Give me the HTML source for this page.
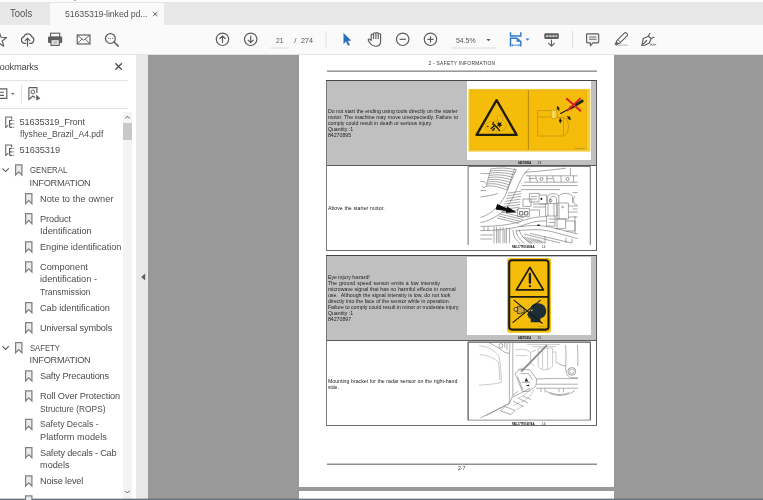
<!DOCTYPE html>
<html lang="en"><head><meta charset="utf-8"><title>51635319-linked pdf</title>
<style>
html,body{margin:0;padding:0;}
body{width:763px;height:500px;position:relative;overflow:hidden;background:#999;font-family:"Liberation Sans",sans-serif;}
.b{position:absolute;}
.t{position:absolute;white-space:pre;font-family:"Liberation Sans",sans-serif;}
#txt{position:absolute;left:0;top:0;width:763px;height:500px;will-change:transform;}
svg{position:absolute;overflow:visible;}
</style></head><body>
<div class="b" style="left:0px;top:0px;width:763px;height:3px;background:#fcfcfc;"></div>
<div class="b" style="left:0px;top:1.8px;width:763px;height:0.9px;background:#e6e6e6;"></div>
<div class="b" style="left:73.6px;top:0px;width:2px;height:0.7px;background:#aaaaaa;"></div>
<div class="b" style="left:0px;top:2.7px;width:763px;height:22.7px;background:#e8e8e8;"></div>
<div class="b" style="left:50px;top:2.7px;width:113.5px;height:22.7px;background:#fafafa;border-radius:2px 2px 0 0;"></div>
<div class="b" style="left:0px;top:25.4px;width:763px;height:29.1px;background:#fafafa;"></div>
<div class="b" style="left:0px;top:54px;width:763px;height:1px;background:#e3e3e3;"></div>
<div class="b" style="left:148px;top:55px;width:615px;height:445px;background:#999999;"></div>
<div class="b" style="left:0px;top:55px;width:136px;height:445px;background:#ffffff;"></div>
<div class="b" style="left:136px;top:55px;width:12px;height:445px;background:#e9e9e9;"></div>
<div class="b" style="left:123px;top:112px;width:9.4px;height:388px;background:#f4f4f4;"></div>
<div class="b" style="left:123px;top:122.6px;width:9.2px;height:17.6px;background:#c8c8c8;"></div>
<div class="b" style="left:0px;top:80px;width:128px;height:1px;background:#e2e2e2;"></div>
<div class="b" style="left:0px;top:108px;width:128px;height:1px;background:#e2e2e2;"></div>
<div class="b" style="left:20.7px;top:85px;width:1px;height:18px;background:#e4e4e4;"></div>
<div class="b" style="left:299px;top:55px;width:315px;height:432.2px;background:#ffffff;"></div>
<div class="b" style="left:299px;top:491px;width:315px;height:8px;background:#ffffff;"></div>
<div class="b" style="left:327px;top:70px;width:270px;height:1px;background:#c2c2c2;"></div>
<div class="b" style="left:327px;top:71px;width:270px;height:1px;background:#9a9a9a;"></div>
<div class="b" style="left:327px;top:80px;width:270px;height:170.4px;background:#ffffff;"></div>
<div class="b" style="left:327px;top:80px;width:270px;height:85.19999999999999px;background:#c0c0c0;"></div>
<div class="b" style="left:326.3px;top:80px;width:1.1px;height:170.4px;background:#7a7a7a;"></div>
<div class="b" style="left:596.1px;top:80px;width:1.0px;height:170.4px;background:#5a5a5a;"></div>
<div class="b" style="left:326.3px;top:79.6px;width:270.8px;height:1.1px;background:#454545;"></div>
<div class="b" style="left:326.3px;top:249.9px;width:270.8px;height:1.0px;background:#6a6a6a;"></div>
<div class="b" style="left:327px;top:164.79999999999998px;width:270px;height:0.9px;background:#5a5a5a;"></div>
<div class="b" style="left:467.2px;top:81.2px;width:123.6px;height:78.6px;background:#ffffff;"></div>
<div class="b" style="left:327px;top:255.6px;width:270px;height:170.00000000000003px;background:#ffffff;"></div>
<div class="b" style="left:327px;top:255.6px;width:270px;height:84.70000000000002px;background:#c0c0c0;"></div>
<div class="b" style="left:326.3px;top:255.6px;width:1.1px;height:170.00000000000003px;background:#7a7a7a;"></div>
<div class="b" style="left:596.1px;top:255.6px;width:1.0px;height:170.00000000000003px;background:#5a5a5a;"></div>
<div class="b" style="left:326.3px;top:255.2px;width:270.8px;height:1.1px;background:#454545;"></div>
<div class="b" style="left:326.3px;top:425.1px;width:270.8px;height:1.0px;background:#6a6a6a;"></div>
<div class="b" style="left:327px;top:339.90000000000003px;width:270px;height:0.9px;background:#5a5a5a;"></div>
<div class="b" style="left:467.2px;top:256.8px;width:123.6px;height:78.2px;background:#ffffff;"></div>
<div class="b" style="left:327px;top:463px;width:270px;height:1px;background:#c6c6c6;"></div>
<div class="b" style="left:327px;top:464px;width:270px;height:1px;background:#8e8e8e;"></div>
<div class="b" style="left:0px;top:498px;width:763px;height:1px;background:rgba(90,105,120,0.35);"></div>
<div class="b" style="left:0px;top:499px;width:763px;height:1px;background:#66727e;"></div>
<svg width="763" height="500" viewBox="0 0 763 500" style="left:0;top:0"><polygon points="-0.90,32.10 1.04,37.23 6.52,37.49 2.24,40.92 3.68,46.21 -0.90,43.20 -5.48,46.21 -4.04,40.92 -8.32,37.49 -2.84,37.23" fill="none" stroke="#5e5e5e" stroke-width="1.2" stroke-linejoin="round"/>
<path transform="translate(27.6,39.6) scale(0.92,0.97) translate(-27.6,-39.6)" d="M25.6,43.4 H24.4 A3.4,3.4 0 0 1 23.5,36.7 A4.5,4.5 0 0 1 32,36.6 A3.5,3.5 0 0 1 31,43.4 H29.6" fill="none" stroke="#5e5e5e" stroke-width="1.3" stroke-linecap="round"/>
<path d="M27.5,46.2 V38.4 M25.2,40.6 L27.5,38.2 L29.8,40.6" fill="none" stroke="#5e5e5e" stroke-width="1.2" stroke-linecap="round" stroke-linejoin="round"/>
<rect x="50.6" y="33.2" width="9.1" height="4" fill="#fafafa" stroke="#5e5e5e" stroke-width="1.1"/>
<rect x="48" y="36.4" width="14.2" height="6.6" rx="1" fill="#5e5e5e"/>
<rect x="51" y="39.6" width="8.3" height="5.8" fill="#e4e4e4" stroke="#5e5e5e" stroke-width="1.1"/>
<rect x="53.6" y="41.2" width="3.4" height="2.4" fill="#bdbdbd"/>
<rect x="77.2" y="35" width="12.8" height="9" fill="none" stroke="#5e5e5e" stroke-width="1.15"/>
<path d="M77.4,35.2 L83.6,40.2 L89.8,35.2 M77.4,43.8 L82,39 M89.8,43.8 L85.2,39" fill="none" stroke="#5e5e5e" stroke-width="0.9"/>
<circle cx="110.4" cy="38.4" r="4.9" fill="none" stroke="#5e5e5e" stroke-width="1.25"/>
<path d="M114,42 L118.3,46.1" stroke="#5e5e5e" stroke-width="1.5" stroke-linecap="round"/>
<path d="M108,38.5 h0.9 M110,38.5 h0.9 M112,38.5 h0.9" stroke="#5e5e5e" stroke-width="0.9"/>
<circle cx="222.5" cy="39.3" r="6.2" fill="none" stroke="#5e5e5e" stroke-width="1.2"/>
<path d="M222.5,42.5 V35.9 M219.9,38.5 L222.5,35.9 L225.1,38.5" fill="none" stroke="#5e5e5e" stroke-width="1.2" stroke-linecap="round" stroke-linejoin="round"/>
<circle cx="250.7" cy="39.3" r="6.2" fill="none" stroke="#5e5e5e" stroke-width="1.2"/>
<path d="M250.7,36.099999999999994 V42.699999999999996 M248.1,40.099999999999994 L250.7,42.699999999999996 L253.29999999999998,40.099999999999994" fill="none" stroke="#5e5e5e" stroke-width="1.2" stroke-linecap="round" stroke-linejoin="round"/>
<rect x="270.5" y="47.5" width="18.6" height="1" fill="#dcdcdc"/>
<rect x="325.6" y="31" width="0.9" height="17" fill="#dedede"/>
<rect x="572" y="31" width="0.9" height="17" fill="#dedede"/>
<rect x="450.5" y="47.5" width="45.3" height="1" fill="#dcdcdc"/>
<path d="M343.5,33 V43.9 L346,41.6 L348,45.8 L349.9,44.9 L347.9,40.9 L351.2,40.6 Z" fill="#2a70c2"/>
<g transform="translate(375,0) scale(1.12,1) translate(-374.6,0)"><path d="M371.2,40.5 V35.2 a1.05,1.05 0 0 1 2.1,0 V33.8 a1.05,1.05 0 0 1 2.1,0 V33.6 a1.05,1.05 0 0 1 2.1,0 V34.6 a1.05,1.05 0 0 1 2.1,0 V41 C379.8,44.5 378.2,46.3 375.6,46.3 C372.8,46.3 371.4,45 369.6,42.2 C368.6,40.6 368.2,39.6 368.9,39.1 C369.6,38.7 370.4,39.3 371.2,40.5 Z" fill="#fafafa" stroke="#5e5e5e" stroke-width="1.1" stroke-linejoin="round"/>
<path d="M373.3,35.2 V39 M375.4,34 V39 M377.5,34.6 V39" stroke="#5e5e5e" stroke-width="1" fill="none"/></g>
<circle cx="402.7" cy="39.3" r="6.2" fill="none" stroke="#5e5e5e" stroke-width="1.2"/><path d="M399.6,39.3 H405.8" stroke="#5e5e5e" stroke-width="1.2"/>
<circle cx="430.5" cy="39.3" r="6.2" fill="none" stroke="#5e5e5e" stroke-width="1.2"/><path d="M427.4,39.3 H433.6 M430.5,36.2 V42.4" stroke="#5e5e5e" stroke-width="1.2"/>
<path d="M486.3,39 h4.3 l-2.15,2.3 z" fill="#5e5e5e"/>
<path d="M510.5,32.2 V36 H520.8 V32.2" fill="none" stroke="#2e78c8" stroke-width="1.45"/>
<path d="M510.5,46.6 V38.2 H516.8 L520.8,41.6 V46.6" fill="none" stroke="#2e78c8" stroke-width="1.45"/>
<path d="M516.6,38.4 V41.8 H520.6 Z" fill="#2e78c8"/>
<path d="M511.6,45.2 H519.7 M512.8,44.2 L511.6,45.2 L512.8,46.2 M518.5,44.2 L519.7,45.2 L518.5,46.2" fill="none" stroke="#2e78c8" stroke-width="0.8"/>
<path d="M525.6,38.6 h3.8 l-1.9,2.2 z" fill="#2e78c8"/>
<rect x="544.3" y="33.3" width="14.6" height="5.6" rx="1.2" fill="#5e5e5e"/>
<path d="M546.2,36.1 h2.2 M549.3,36.1 h2.2 M552.4,36.1 h2.2 M555.5,36.1 h1.7" stroke="#d8d8d8" stroke-width="1.6"/>
<path d="M551.5,40.2 V46 M548.7,43.4 L551.5,46.2 L554.3,43.4" fill="none" stroke="#5e5e5e" stroke-width="1.2" stroke-linecap="round" stroke-linejoin="round"/>
<path d="M587.4,33.8 H597.9 a0.8,0.8 0 0 1 0.8,0.8 V42 a0.8,0.8 0 0 1 -0.8,0.8 H593 L590.4,45.8 V42.8 H587.4 a0.8,0.8 0 0 1 -0.8,-0.8 V34.6 a0.8,0.8 0 0 1 0.8,-0.8 Z" fill="#f1f1f1" stroke="#5e5e5e" stroke-width="1.15" stroke-linejoin="round"/>
<path d="M589,37.1 H596.4 M589,39.3 H596.4" stroke="#5e5e5e" stroke-width="0.9"/>
<rect x="618" y="44.4" width="9.6" height="1.6" fill="#cfcfcf"/>
<g transform="translate(620.8,39.4) rotate(-45)"><rect x="-5" y="-1.9" width="13.5" height="3.8" rx="1.6" fill="#fafafa" stroke="#5e5e5e" stroke-width="1.1"/><path d="M-5,-1.5 L-7.6,-0.8 V0.8 L-5,1.5 Z" fill="#5e5e5e" stroke="#5e5e5e" stroke-width="0.6"/><path d="M-2.2,-1.9 V1.9" stroke="#5e5e5e" stroke-width="0.8"/></g>
<path d="M641.8,45.5 L643.3,38.6 L648.3,36.2 L651.2,38.5 L649.3,43 L644.8,45.2 Z" fill="#fafafa" stroke="#5e5e5e" stroke-width="1.15" stroke-linejoin="round"/>
<path d="M642,45.3 L646.2,41 M648.3,36.2 L649.9,33.3 M651.2,38.5 L654,37.3" fill="none" stroke="#5e5e5e" stroke-width="1.1" stroke-linecap="round"/>
<circle cx="646.5" cy="40.7" r="0.8" fill="#5e5e5e"/>
<path d="M650.3,43.6 L652.2,45.6 M652.2,43.6 L650.3,45.6 M652.8,45.5 C653.4,43.8 654,43.8 654.3,45.3 C654.8,44.2 655.4,44.2 656,45.3" fill="none" stroke="#5e5e5e" stroke-width="0.8"/>
<path d="M153,11.8 L157.4,16.2 M157.4,11.8 L153,16.2" stroke="#555" stroke-width="0.95"/>
<path d="M115.3,63.2 L121.9,69.8 M121.9,63.2 L115.3,69.8" stroke="#505050" stroke-width="1.25"/>
<path d="M-2,88.9 H6.8 V98.4 H-2" fill="none" stroke="#5e5e5e" stroke-width="1.15"/>
<path d="M-1,92.2 H4 M-1,95.4 H4" stroke="#5e5e5e" stroke-width="1.15"/>
<path d="M11.1,93.1 h3.4 l-1.7,2 z" fill="#5e5e5e"/>
<path d="M28.9,87.6 H36.9 V93 M28.9,87.6 V99.4 L32.9,96 L35,97.8" fill="none" stroke="#5e5e5e" stroke-width="1.15" stroke-linejoin="miter"/>
<circle cx="32.9" cy="91.9" r="1.9" fill="none" stroke="#5e5e5e" stroke-width="1"/>
<path d="M36,94.6 L40.4,98.4 L36.4,100.6 Z" fill="#5e5e5e"/>
<path d="M125.2,118.4 L127.4,116.2 L129.6,118.4" fill="none" stroke="#505050" stroke-width="0.95"/>
<path d="M125.2,490.8 L127.4,493 L129.6,490.8" fill="none" stroke="#505050" stroke-width="0.95"/>
<path d="M145.2,273.6 V280.4 L141.2,277 Z" fill="#606060"/>
<path d="M5.7,127.7 V117.0 H11.6 V119.5" fill="none" stroke="#6a6a6a" stroke-width="1.1"/>
<path d="M5.7,127.7 L8.2,125.1" fill="none" stroke="#6a6a6a" stroke-width="1.1"/>
<path d="M9.6,119.9 V127.3" stroke="#5a5a5a" stroke-width="1.1"/>
<path d="M9.6,120.5 H14.4 M9.6,123.9 H14.4 M9.6,127.3 H14.4" stroke="#5a5a5a" stroke-width="1.2" stroke-dasharray="2.3 0.7 0.9 0.7"/>
<path d="M5.7,155.7 V145.0 H11.6 V147.5" fill="none" stroke="#6a6a6a" stroke-width="1.1"/>
<path d="M5.7,155.7 L8.2,153.1" fill="none" stroke="#6a6a6a" stroke-width="1.1"/>
<path d="M9.6,147.9 V155.3" stroke="#5a5a5a" stroke-width="1.1"/>
<path d="M9.6,148.5 H14.4 M9.6,151.9 H14.4 M9.6,155.3 H14.4" stroke="#5a5a5a" stroke-width="1.2" stroke-dasharray="2.3 0.7 0.9 0.7"/>
<path d="M2.4,168.4 L5.6,171.6 L8.8,168.4" fill="none" stroke="#555" stroke-width="1.05"/>
<path d="M15.6,164.9 H21.9 V175.0 L18.75,171.8 L15.6,175.0 Z" fill="#ececec" stroke="#808080" stroke-width="1.25" stroke-linejoin="miter"/>
<path d="M2.4,346.2 L5.6,349.4 L8.8,346.2" fill="none" stroke="#555" stroke-width="1.05"/>
<path d="M15.6,342.70000000000005 H21.9 V352.8 L18.75,349.59999999999997 L15.6,352.8 Z" fill="#ececec" stroke="#808080" stroke-width="1.25" stroke-linejoin="miter"/>
<path d="M25.6,193.5 H31.9 V203.6 L28.75,200.4 L25.6,203.6 Z" fill="#ececec" stroke="#808080" stroke-width="1.25" stroke-linejoin="miter"/>
<path d="M25.6,213.5 H31.9 V223.6 L28.75,220.4 L25.6,223.6 Z" fill="#ececec" stroke="#808080" stroke-width="1.25" stroke-linejoin="miter"/>
<path d="M25.6,241.9 H31.9 V252.0 L28.75,248.8 L25.6,252.0 Z" fill="#ececec" stroke="#808080" stroke-width="1.25" stroke-linejoin="miter"/>
<path d="M25.6,261.90000000000003 H31.9 V272.0 L28.75,268.79999999999995 L25.6,272.0 Z" fill="#ececec" stroke="#808080" stroke-width="1.25" stroke-linejoin="miter"/>
<path d="M25.6,302.70000000000005 H31.9 V312.8 L28.75,309.59999999999997 L25.6,312.8 Z" fill="#ececec" stroke="#808080" stroke-width="1.25" stroke-linejoin="miter"/>
<path d="M25.6,322.70000000000005 H31.9 V332.8 L28.75,329.59999999999997 L25.6,332.8 Z" fill="#ececec" stroke="#808080" stroke-width="1.25" stroke-linejoin="miter"/>
<path d="M25.6,370.90000000000003 H31.9 V381.0 L28.75,377.79999999999995 L25.6,381.0 Z" fill="#ececec" stroke="#808080" stroke-width="1.25" stroke-linejoin="miter"/>
<path d="M25.6,390.90000000000003 H31.9 V401.0 L28.75,397.79999999999995 L25.6,401.0 Z" fill="#ececec" stroke="#808080" stroke-width="1.25" stroke-linejoin="miter"/>
<path d="M25.6,419.3 H31.9 V429.4 L28.75,426.19999999999993 L25.6,429.4 Z" fill="#ececec" stroke="#808080" stroke-width="1.25" stroke-linejoin="miter"/>
<path d="M25.6,447.70000000000005 H31.9 V457.8 L28.75,454.59999999999997 L25.6,457.8 Z" fill="#ececec" stroke="#808080" stroke-width="1.25" stroke-linejoin="miter"/>
<path d="M25.6,475.90000000000003 H31.9 V486.0 L28.75,482.79999999999995 L25.6,486.0 Z" fill="#ececec" stroke="#808080" stroke-width="1.25" stroke-linejoin="miter"/>
<path d="M25.6,495.90000000000003 H31.9 V506.0 L28.75,502.79999999999995 L25.6,506.0 Z" fill="#ececec" stroke="#808080" stroke-width="1.25" stroke-linejoin="miter"/>
<rect x="468.3" y="88.9" width="122" height="62.7" fill="#f7cc38"/>
<rect x="470.2" y="90.4" width="116.5" height="59.1" fill="#f5bd0a" stroke="#d9a514" stroke-width="0.5"/>
<path d="M528.4,90.4 V149.5" stroke="#8a6410" stroke-width="0.6"/>
<path d="M496.6,100.2 L476.6,134.9 H516.6 Z" fill="none" stroke="#221e10" stroke-width="2.4" stroke-linejoin="round"/>
<path d="M485.4,126.6 C485.2,123.6 488,121.6 491.6,121.4 L497.6,121.2 L497.4,116.4 C497.6,114.6 502.2,114.6 502.4,116.4 L502.6,120.2 C505.6,121.4 506.6,124.4 505.6,127.6 C504.6,130.6 501,131.4 497,131 L488.6,130.6 C486.4,130.2 485.4,128.6 485.4,126.6 Z" fill="none" stroke="#c28f08" stroke-width="0.6"/>
<circle cx="487.8" cy="126.5" r="0.8" fill="#1d1b16"/>
<path d="M491.2,128.4 L494.6,125.4 L497.2,127.6 L499.4,130.4 M492.6,123.8 L494.8,125.2 M494.4,128.6 L492.8,130.2" fill="none" stroke="#1d1b16" stroke-width="1.4" stroke-linecap="round" stroke-linejoin="round"/>
<path d="M498.4,121 L499.6,123 L501.8,122.2 L500.8,124.2 L502.6,125.6 L500.4,125.8 L500,128 L498.8,126 L496.8,126.4 L498,124.6 L496.6,122.8 L498.6,123.2 Z" fill="#1d1b16"/>
<circle cx="493.4" cy="122.6" r="0.7" fill="#1d1b16"/>
<path d="M537.6,110.6 H551 M557,113 V117.4 H563.5 C567.2,118.6 568.6,123 568.4,127 C568.2,132 566.4,135.4 563.5,136 H537.6" fill="none" stroke="#c4940c" stroke-width="0.8"/>
<path d="M537.6,117 H551 M563.5,117.4 V136 M537.6,110.6 V136" fill="none" stroke="#c4940c" stroke-width="0.8"/>
<rect x="551" y="110.2" width="6" height="8.4" rx="1.6" fill="#f8cf45" stroke="#c4940c" stroke-width="0.7"/>
<path d="M553.4,111.4 V117.6" stroke="#fbe08a" stroke-width="1.1"/>
<path d="M560.6,113.4 L570.4,108.2" stroke="#1b1b1b" stroke-width="1.1" stroke-linecap="round"/>
<path d="M570.6,108 L582.2,101" stroke="#1f2a1c" stroke-width="3" stroke-linecap="round"/>
<path d="M557.4,106 L559.6,108.6 L558.6,108.8 L559.2,111 L557.8,109 L557,109.4 Z M570.6,120 L567.6,118.4 L568.4,117.8 L566.8,116.2 L569.2,117 L569.6,116.2 Z M560.2,123.2 L559,119.8 L560,120 L560,118 L561,120.2 L561.8,120 Z" fill="#1b1b1b" stroke="#1b1b1b" stroke-width="0.4"/>
<path d="M566.8,98.8 L580.4,110.8 M580,98.6 L567.6,110.4" stroke="#d6222a" stroke-width="2" stroke-linecap="round"/>
<rect x="468.1" y="166.4" width="122.2" height="78.4" fill="#ffffff"/><path d="M468.1,244.8 V166.4 H590.3 V244.8" fill="none" stroke="#4a4a4a" stroke-width="0.8"/>
<path d="M491,168.6 C489,175 487.6,181 486.4,186.4 M516.4,169.6 C513,177 510,184 507,189.8 M491.0,169.0 C499.0,167.4 508.4,167.8 516.4,170.0 M490.4,171.2 C498.4,169.6 507.2,170.3 515.2,172.5 M489.9,173.3 C497.9,171.8 506.0,172.8 514.0,174.9 M489.3,175.5 C497.3,173.9 504.9,175.2 512.9,177.4 M488.7,177.7 C496.7,176.1 503.7,177.7 511.7,179.9 M488.1,179.9 C496.1,178.3 502.5,180.2 510.5,182.4 M487.6,182.1 C495.6,180.5 501.3,182.7 509.3,184.8 M487.0,184.2 C495.0,182.6 500.2,185.1 508.2,187.3 M486.4,186.4 C494.4,184.8 499.0,187.6 507.0,189.8 M480.4,173.6 H489.6 M480.4,181.6 C483,181 485,182 486.6,183.6 M482,186 l2,2 l2,-2 M480.4,190.6 H486 M480.4,197 C486,196.4 492,195.4 498,193.4 M515,168 C511,178 509.6,184 507.6,190 C505,197 501,203 496,208 C491.6,212.6 486,216 480.4,217.6 M529.4,168.4 C524,173 520.4,180 517.6,186.6 C514,195 511.4,201 507.6,206.4 C503,212.6 492,220.6 480.4,222.6 M524.4,172.4 C538,171.4 552,170 566,168.2 M570.4,168.2 V175.4 M526,175.8 H577.6 M524,182.2 H577.6 M522,185.6 H577.6 M521,189.6 H560 M530,175.8 V182.2 M535.6,175.8 L537.6,182.2 M547,175.8 V182.2 M552.6,175.8 L554.4,182.2 M561,175.8 V182.2 M573.6,175.8 V182.2 M529,178.6 H536 M546,178.6 H553 M529.4,193.4 H539 V202 H529.4 Z M539,195 H546.6 V204 H539 M531,196.6 H537 M531,199 H537 M547.6,203 V197 C548,192.6 558.4,192.6 558.8,197 V203 M550,203 V198.6 C550.6,195.6 556,195.6 556.4,198.6 V203 M558.8,196 C562,192 570,192.6 572.6,196.6 V203 M572.6,192.6 H577.6 M575,196 C573,198.6 573,202.6 575.6,205 H577.6 M572.6,209 H577.6 M557,203 H568.4 V219 H557 Z M559,203 V219 M545.6,203.6 H557 V216 H545.6 Z M548,203.6 V216 M554,203.6 V216 M523,199 H531 V206.4 H523 Z M517.6,208.6 H529.4 V216.6 H517.6 Z M529.4,210 H539.6 V216 M533,204 H545.6 M533,207 H545.6 M546.6,216 V226 H555 V216 M555,219 H565.6 V228.6 H555 M565.6,221 H575 V231 H565.6 M575,216 V233 M557,219 V228.6 M548.6,219 H555 M548.6,222.4 H555 M568.4,206 H577.6 M568.4,212 H577.6 M568.4,217 H577.6 M480.4,226.4 C498,226.4 512,224.6 523,220.6 C531,217.6 538,216.6 546.6,216.6 M480.4,230.6 C499,230.6 514,228.6 525.6,224.4 C533,221.6 539,220.8 546.6,220.8 M519,226.8 C531,225 540,225 550,227 L577.6,234 M516,231 C531,229 541,229.4 551,231.4 L577.6,238.6 M524,234 L560,243 M530,233.4 L572,243 M545,236 V243 M566,237.6 V243 M572,238.8 V243 M494,226.6 V243.4 M496.6,226.6 V243.4 M500,227 V243.4 M503,227 V243.4 M506.4,227.6 V243.4 M509.6,228 V243.4 M498.2,229 V243 M504.8,230 V243 M480.4,235 H493 M480.4,239 H492 M484,226.6 V231 M488,226.6 V231 M513,229.6 C513,236 516,240.6 520,243.4 M516,229.6 C516.4,236 520,240 524.6,243.4 M519,229.6 C521,236 526,240.6 532,243.4 M522.0,236.0 L530.0,243.4 M524.6,236.6 L532.6,243.4 M527.2,237.2 L535.2,243.4 M529.8,237.8 L537.8,243.4 M532.4,238.4 L540.4,243.4 M535.0,239.0 L543.0,243.4 M537.6,239.6 L545.6,243.4 M508.0,193.2 L521.4,191.0 M507.1,195.9 L521.1,193.7 M506.2,198.6 L520.8,196.4 M505.3,201.3 L520.5,199.1 M504.4,204.0 L520.2,201.8 M503.5,206.7 L519.9,204.5 M502.6,209.4 L519.6,207.2 M501.7,212.1 L519.3,209.9 M500,214 L523,219.6 M498.6,216 L521,221.6 M497,218 L519,223.4 M502,212 L524,217.6" fill="none" stroke="#6f6f6f" stroke-width="0.6"/>
<circle cx="541.4" cy="179" r="1.5" fill="none" stroke="#555" stroke-width="0.6"/><circle cx="567.6" cy="179" r="1.5" fill="none" stroke="#555" stroke-width="0.6"/><circle cx="550.6" cy="200.6" r="1.3" fill="none" stroke="#444" stroke-width="0.6"/><circle cx="562.6" cy="207" r="0.9" fill="none" stroke="#555" stroke-width="0.5"/>
<path d="M541.4,197.6 l1.3,1.3 l-1.3,1.3 l-1.3,-1.3 z M537.4,224.4 h2.4 v1.6 h-2.4 z" fill="#222"/>
<path d="M519.6,211.6 h3.2 v3.4 h-3.2 z M524.6,211.6 h3.2 v3.4 h-3.2 z" fill="none" stroke="#333" stroke-width="0.7"/>
<path d="M497.1,203.9 L507,208.2 L507.2,206.6 L516.8,212.4 L506,212.8 L505.8,211.1 L495.6,209.6 Z" fill="#0c0c0c"/>
<rect x="507" y="257.9" width="44" height="74.8" rx="3.2" fill="#f5bd0a"/>
<rect x="509.2" y="260.3" width="39.3" height="69.3" rx="2.8" fill="none" stroke="#1d1b16" stroke-width="2.1"/>
<path d="M509.2,296.9 H548.5" stroke="#1d1b16" stroke-width="1.9"/>
<path d="M529.9,267.4 L516.4,289.9 H543.4 Z" fill="none" stroke="#1d1b16" stroke-width="1.8" stroke-linejoin="round"/>
<path d="M529.9,274 V282.8" stroke="#1d1b16" stroke-width="2.3" stroke-linecap="round"/><circle cx="529.9" cy="286.2" r="1.15" fill="#1d1b16"/>
<path d="M530.4,309.4 C530.8,305 534,303.2 538.2,303.2 C543,303.2 546.4,306.8 546.2,311.4 C546,315 544,317.4 540.4,318.6 L540.2,322.2 H530.8 L530.6,318.4 C529,318.4 528.2,317.6 528.4,316.2 L527,314.6 L528.6,312.4 Z" fill="#1e2c36"/>
<circle cx="531.8" cy="310.4" r="0.8" fill="#e9c15a"/>
<path d="M517.4,306.6 H520.6 L524.2,308.4 V312.2 L520.6,313.6 H517.4 Z" fill="#caa23c" stroke="#1d1b16" stroke-width="0.7"/><circle cx="515.8" cy="309.4" r="1.9" fill="#f6d060" stroke="#1d1b16" stroke-width="0.8"/>
<path d="M514.2,300.4 L542.2,323.2 M540.2,300.4 L513,322.4" stroke="#1d1b16" stroke-width="1.2" stroke-linecap="round"/>
<rect x="468.1" y="342.1" width="122.2" height="78" fill="#ffffff" stroke="#777" stroke-width="0.8"/><path d="M468.1,420.1 V342.1 H590.3 V420.1" fill="none" stroke="#4a4a4a" stroke-width="0.8"/>
<path d="M479,345.8 C488,346.6 495,350 499,356.4 C500.6,364 501,374 501.4,382.6 C494,384 486,385 479,385 M479.8,354.6 C487,355 494,357.6 498.6,362.4 C499.4,368 499.6,374 499.6,380 M515,350 C521,348.6 527,349 530.6,352.4 V363 C528,367 523,369 517.4,369.4 M516,355.6 H527.4 M530.6,352.4 L536,350 M530.6,363 L535,366 M517,398.4 C523,396.4 528,392.6 530.4,388 M521,402.4 C527.4,399.6 532,395 534,389.4 M513,406 L520,402 M516,410 L524,405.4 M538.2,348.2 H552.6 V366 C549,370.6 543,370.6 539.6,368 M538.2,348.2 V366 M542.6,348.2 V368.6 M547.6,348.2 V369.6 M552.6,352 H556 V362 M539.6,368 L538.2,366 M527,344.4 H560 M532,346.6 H556" fill="none" stroke="#a2a2a2" stroke-width="0.55"/>
<path d="M489.4,343 C495,345.6 500,348.6 504.6,352.2 L509.4,353.6 V403.4 L480.6,417.8 M509.4,353.6 C510,349 510,346 509.6,343 M512.8,343 V395.4 L509.4,403.4 M499,345.8 a1.9,2.3 0 1 0 3.8,0 a1.9,2.3 0 1 0 -3.8,0 M504.8,343 V348 M507,343 V350 M515,373.4 L519.6,369.6 H529.6 L536.6,379 L536,385.6 L529,391.4 L522.4,391.4 Z M520.6,373.6 H528.4 L532.6,379.6 M521.6,382.4 H530.4 M517.6,376.6 L523,390 M513,397 L530,388.4 M509.4,403.4 L486,415.6 M512.8,395.4 L518,391.4 M505,406.6 L515,410.4 L511,414.6 L500.6,411 Z M513,401 L523,406.4 M519,398.6 L528,403 M523,396 L531,399.6 M565.4,345 C566.4,352 566,360 565.6,366 C565.6,372 567,376.6 571,377.8 H578 M577.4,345 C578,352 578,360 577.6,366 M545,378.6 H578 M536.6,379 L545,378.6 M536.4,384.2 H578 M536,388.2 H578 M541,388.4 V392 M545,388.4 V392.4 M559,388.4 V392 M563.6,388.4 V392.6 M550,392.4 C555,395 563,395.4 569,392.6 M546,391 C554,397 566,397 575,390.6 M556,362 C560,364.6 563,366 565.6,366" fill="none" stroke="#7a7a7a" stroke-width="0.6"/>
<circle cx="571.8" cy="371.4" r="3.9" fill="none" stroke="#6e6e6e" stroke-width="0.65"/><circle cx="571.8" cy="371.4" r="2.3" fill="none" stroke="#808080" stroke-width="0.55"/>
<path d="M521.2,371.6 L547,345.2" stroke="#8a8a8a" stroke-width="1.7" stroke-linecap="butt"/>
<path d="M524.6,381.4 l1.7,-3.6 l2,3.6 z M525.6,385.6 l3.6,-1.2 v1.8 z" fill="#222"/></svg>
<div id="txt"><span class="t" style="left:10.00px;top:7.00px;font-size:10.2px;line-height:13px;color:#555;transform:scaleX(0.9323);transform-origin:0 0;">Tools</span>
<span class="t" style="left:65.00px;top:8.00px;font-size:8.8px;line-height:12px;color:#555;letter-spacing:-0.107px;">51635319-linked pd...</span>
<span class="t" style="left:-6.50px;top:60.00px;font-size:9.4px;line-height:13px;color:#4b4b4b;letter-spacing:-0.235px;">Bookmarks</span>
<span class="t" style="left:19.60px;top:116.00px;font-size:9.2px;line-height:12px;color:#4d4d4d;letter-spacing:-0.152px;">51635319_Front</span>
<span class="t" style="left:19.60px;top:128.00px;font-size:9.2px;line-height:12px;color:#4d4d4d;transform:scaleX(0.9372);transform-origin:0 0;">flyshee_Brazil_A4.pdf</span>
<span class="t" style="left:19.60px;top:144.00px;font-size:9.2px;line-height:12px;color:#4d4d4d;letter-spacing:-0.054px;">51635319</span>
<span class="t" style="left:29.60px;top:164.00px;font-size:9.2px;line-height:12px;color:#4d4d4d;transform:scaleX(0.8483);transform-origin:0 0;">GENERAL</span>
<span class="t" style="left:29.60px;top:177.00px;font-size:9.2px;line-height:12px;color:#4d4d4d;letter-spacing:-0.247px;">INFORMATION</span>
<span class="t" style="left:40.00px;top:193.00px;font-size:9.2px;line-height:12px;color:#4d4d4d;letter-spacing:0.058px;">Note to the owner</span>
<span class="t" style="left:40.00px;top:213.00px;font-size:9.2px;line-height:12px;color:#4d4d4d;letter-spacing:-0.101px;">Product</span>
<span class="t" style="left:40.00px;top:225.00px;font-size:9.2px;line-height:12px;color:#4d4d4d;letter-spacing:0.010px;">Identification</span>
<span class="t" style="left:40.00px;top:241.00px;font-size:9.2px;line-height:12px;color:#4d4d4d;letter-spacing:-0.045px;">Engine identification</span>
<span class="t" style="left:40.00px;top:261.00px;font-size:9.2px;line-height:12px;color:#4d4d4d;letter-spacing:0.048px;">Component</span>
<span class="t" style="left:40.00px;top:273.00px;font-size:9.2px;line-height:12px;color:#4d4d4d;letter-spacing:0.021px;">identification -</span>
<span class="t" style="left:40.00px;top:286.00px;font-size:9.2px;line-height:12px;color:#4d4d4d;transform:scaleX(0.9326);transform-origin:0 0;">Transmission</span>
<span class="t" style="left:40.00px;top:302.00px;font-size:9.2px;line-height:12px;color:#4d4d4d;letter-spacing:-0.032px;">Cab identification</span>
<span class="t" style="left:40.00px;top:322.00px;font-size:9.2px;line-height:12px;color:#4d4d4d;letter-spacing:-0.138px;">Universal symbols</span>
<span class="t" style="left:29.60px;top:342.00px;font-size:9.2px;line-height:12px;color:#4d4d4d;transform:scaleX(0.8327);transform-origin:0 0;">SAFETY</span>
<span class="t" style="left:29.60px;top:354.00px;font-size:9.2px;line-height:12px;color:#4d4d4d;letter-spacing:-0.247px;">INFORMATION</span>
<span class="t" style="left:40.00px;top:370.00px;font-size:9.2px;line-height:12px;color:#4d4d4d;letter-spacing:-0.183px;">Safty Precautions</span>
<span class="t" style="left:40.00px;top:390.00px;font-size:9.2px;line-height:12px;color:#4d4d4d;letter-spacing:-0.106px;">Roll Over Protection</span>
<span class="t" style="left:40.00px;top:403.00px;font-size:9.2px;line-height:12px;color:#4d4d4d;transform:scaleX(0.9100);transform-origin:0 0;">Structure (ROPS)</span>
<span class="t" style="left:40.00px;top:418.00px;font-size:9.2px;line-height:12px;color:#4d4d4d;transform:scaleX(0.9394);transform-origin:0 0;">Safety Decals -</span>
<span class="t" style="left:40.00px;top:431.00px;font-size:9.2px;line-height:12px;color:#4d4d4d;letter-spacing:0.035px;">Platform models</span>
<span class="t" style="left:40.00px;top:447.00px;font-size:9.2px;line-height:12px;color:#4d4d4d;letter-spacing:-0.199px;">Safety decals - Cab</span>
<span class="t" style="left:40.00px;top:459.00px;font-size:9.2px;line-height:12px;color:#4d4d4d;letter-spacing:-0.010px;">models</span>
<span class="t" style="left:40.00px;top:475.00px;font-size:9.2px;line-height:12px;color:#4d4d4d;letter-spacing:-0.164px;">Noise level</span>
<span class="t" style="left:428.50px;top:60.00px;font-size:4.9px;line-height:7px;color:#333;letter-spacing:0.257px;">2 - SAFETY INFORMATION</span>
<span class="t" style="left:458.00px;top:464.00px;font-size:5.2px;line-height:8px;color:#333;letter-spacing:-0.072px;">2-7</span>
<span class="t" style="left:327.90px;top:107.00px;font-size:5.24px;line-height:8px;color:#222;word-spacing:0.009px;">Do not start the ending using tools directly on the starter</span>
<span class="t" style="left:327.90px;top:113.00px;font-size:5.24px;line-height:8px;color:#222;word-spacing:0.251px;">motor. The machine may move unexpectedly. Failure to</span>
<span class="t" style="left:327.90px;top:119.00px;font-size:5.24px;line-height:8px;color:#222;word-spacing:0.000px;">comply could result in death or serious injury.</span>
<span class="t" style="left:327.90px;top:125.00px;font-size:5.24px;line-height:8px;color:#222;word-spacing:0.000px;">Quantity :1</span>
<span class="t" style="left:327.90px;top:131.00px;font-size:5.24px;line-height:8px;color:#222;letter-spacing:0.000px;">84270895</span>
<span class="t" style="left:327.90px;top:204.00px;font-size:5.24px;line-height:8px;color:#222;word-spacing:0.293px;">Above the starter motor.</span>
<span class="t" style="left:327.90px;top:273.00px;font-size:5.24px;line-height:8px;color:#222;word-spacing:0.000px;">Eye injury hazard!</span>
<span class="t" style="left:327.90px;top:279.00px;font-size:5.24px;line-height:8px;color:#222;word-spacing:0.577px;">The ground speed sensor emits a low intensity</span>
<span class="t" style="left:327.90px;top:285.00px;font-size:5.24px;line-height:8px;color:#222;word-spacing:0.212px;">microwave signal that has no harmful effects in normal</span>
<span class="t" style="left:327.90px;top:291.00px;font-size:5.24px;line-height:8px;color:#222;word-spacing:0.200px;">use.  Although the signal intensity is low, do not look</span>
<span class="t" style="left:327.90px;top:297.00px;font-size:5.24px;line-height:8px;color:#222;word-spacing:0.028px;">directly into the face of the sensor while in operation.</span>
<span class="t" style="left:327.90px;top:303.00px;font-size:5.24px;line-height:8px;color:#222;word-spacing:-0.133px;">Failure to comply could result in minor or moderate injury.</span>
<span class="t" style="left:327.90px;top:309.00px;font-size:5.24px;line-height:8px;color:#222;word-spacing:0.000px;">Quantity :1</span>
<span class="t" style="left:327.90px;top:315.00px;font-size:5.24px;line-height:8px;color:#222;letter-spacing:0.000px;">84270897</span>
<span class="t" style="left:327.90px;top:377.00px;font-size:5.24px;line-height:8px;color:#222;word-spacing:0.143px;">Mounting bracket for the radar sensor on the right-hand</span>
<span class="t" style="left:327.90px;top:383.00px;font-size:5.24px;line-height:8px;color:#222;letter-spacing:0.000px;">side.</span>
<span class="t" style="left:276.20px;top:35.00px;font-size:8px;line-height:11px;color:#555;transform:scaleX(0.8428);transform-origin:0 0;">21</span>
<span class="t" style="left:294.20px;top:35.00px;font-size:8px;line-height:11px;color:#555;">/</span>
<span class="t" style="left:301.00px;top:35.00px;font-size:8px;line-height:11px;color:#555;transform:scaleX(0.8915);transform-origin:0 0;">274</span>
<span class="t" style="left:455.70px;top:35.00px;font-size:8px;line-height:11px;color:#555;transform:scaleX(0.8641);transform-origin:0 0;">54.5%</span>
<span class="t" style="left:518.00px;top:161.00px;font-size:2.7px;line-height:5px;color:#111;letter-spacing:-0.090px;font-weight:bold;">84270895A</span>
<span class="t" style="left:537.60px;top:160.00px;font-size:3.1px;line-height:6px;color:#222;letter-spacing:0.076px;">13</span>
<span class="t" style="left:512.40px;top:245.00px;font-size:2.7px;line-height:5px;color:#111;transform:scaleX(0.9277);transform-origin:0 0;font-weight:bold;">RAIL17TR01696AA</span>
<span class="t" style="left:542.00px;top:244.00px;font-size:3.1px;line-height:6px;color:#222;letter-spacing:0.076px;">14</span>
<span class="t" style="left:518.00px;top:336.00px;font-size:2.7px;line-height:5px;color:#111;letter-spacing:-0.090px;font-weight:bold;">84297241A</span>
<span class="t" style="left:537.60px;top:335.00px;font-size:3.1px;line-height:6px;color:#222;letter-spacing:0.076px;">15</span>
<span class="t" style="left:512.40px;top:422.00px;font-size:2.7px;line-height:5px;color:#111;transform:scaleX(0.9277);transform-origin:0 0;font-weight:bold;">RAIL17TR01697AA</span>
<span class="t" style="left:542.00px;top:421.00px;font-size:3.1px;line-height:6px;color:#222;letter-spacing:0.076px;">16</span>
<span class="t" style="left:574.90px;top:146.00px;font-size:2.2px;line-height:4px;color:#8a6a14;letter-spacing:0.014px;">84270895</span>
<span class="t" style="left:538.00px;top:324.00px;font-size:1.7px;line-height:4px;color:#8a6a14;letter-spacing:0.055px;">84297241</span></div>
</body></html>
